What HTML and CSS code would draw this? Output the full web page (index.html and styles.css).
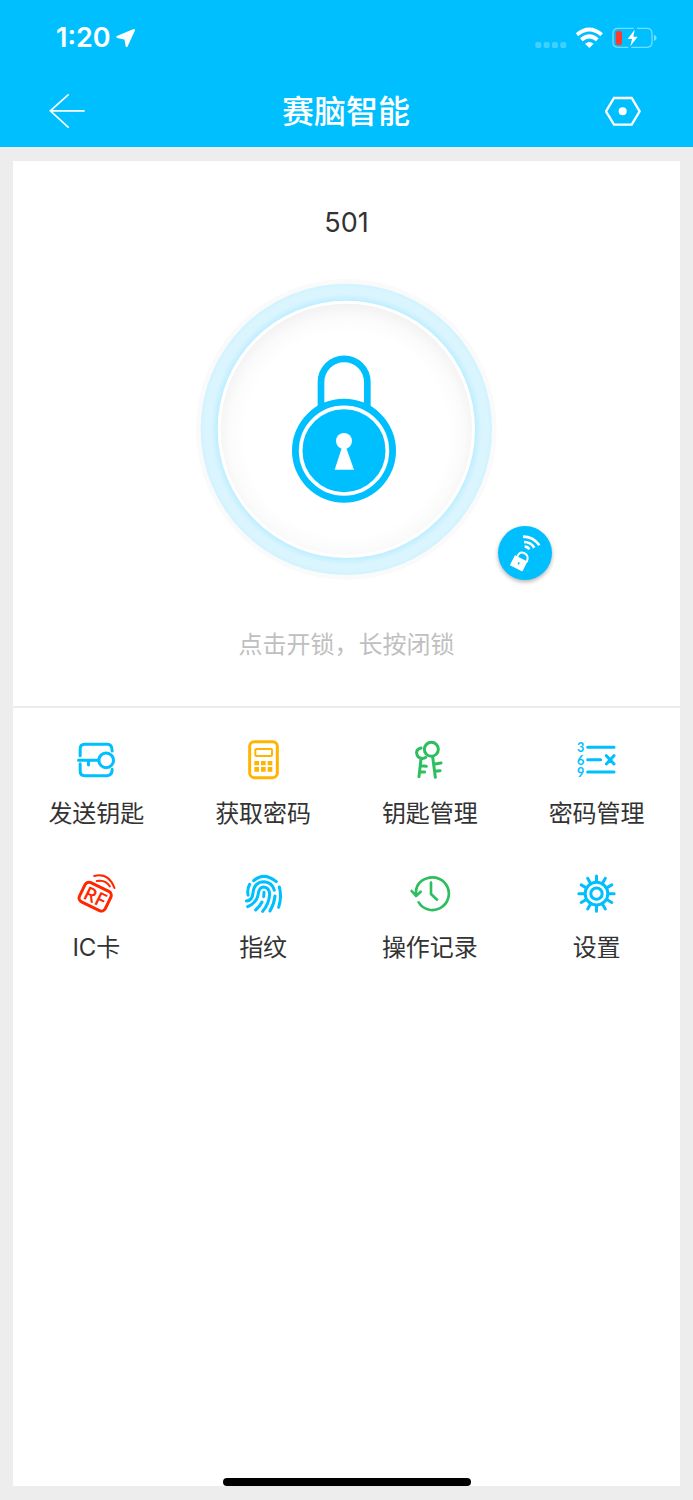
FILE: index.html
```html
<!DOCTYPE html>
<html lang="zh-CN">
<head>
<meta charset="utf-8">
<meta name="viewport" content="width=device-width, initial-scale=1">
<title>赛脑智能</title>
<link rel="stylesheet" href="styles.css">
</head>
<body>
<header class="header">
  <div class="status">
    <div class="status-left">
      <span class="time">1:20</span>
      <svg class="locate" viewBox="348 84 60 60" aria-hidden="true"><path d="M402 90 380 138 376 116 352 111Z" fill="#fff" stroke="#fff" stroke-width="6" stroke-linejoin="round"/></svg>
    </div>
    <div class="status-right">
      <svg class="signal" viewBox="567 81 96 66" aria-hidden="true"><g fill="#fff" opacity=".25"><rect x="568" y="126" width="18" height="18" rx="5"/><rect x="593" y="126" width="18" height="18" rx="5"/><rect x="618" y="126" width="18" height="18" rx="5"/><rect x="643" y="126" width="18" height="18" rx="5"/></g></svg>
      <svg class="wifi" viewBox="687 81 87 66" aria-hidden="true"><g fill="none" stroke="#fff" stroke-width="12"><path d="M693 104Q730 73 767 104"/><path d="M706 119Q730 99 754 119"/></g><path d="M717 131Q730 121 743 131L730 144Z" fill="#fff"/></svg>
      <svg class="battery" viewBox="798 81 138 66" aria-hidden="true"><g fill="none" stroke="#fff" stroke-opacity=".45" stroke-width="4"><path d="M863 85H816Q801 85 801 100V127Q801 142 816 142H847"/><path d="M873 85H903Q918 85 918 100V127Q918 142 903 142H856"/></g><path d="M924 104Q932 107 932 113.500Q932 120 924 123Z" fill="#fff" fill-opacity=".45"/><rect x="809" y="93" width="19" height="42" rx="6" fill="#ff3b30"/><path d="M866 89 845 117H858L853 139 875 110H862Z" fill="#fff"/></svg>
    </div>
  </div>
  <nav class="nav">
    <button class="icon-button" type="button" aria-label="返回"><svg viewBox="146 276 114 114"><path d="M253 329.500H150M205 280 150 329.500 205 380" fill="none" stroke="#fff" stroke-width="5"/></svg></button>
    <h1 class="title">赛脑智能</h1>
    <button class="icon-button" type="button" aria-label="网关"><svg viewBox="777 279 114 114"><path d="M780 334 804 294H857L881 334 857 374H804Z" fill="none" stroke="#fff" stroke-width="7"/><circle cx="830" cy="334" r="12" fill="#fff"/></svg></button>
  </nav>
</header>

<main class="card">
  <section class="lock-panel">
    <h2 class="room">501</h2>
    <div class="dial-row">
      <button class="dial" type="button" aria-label="开锁">
        <svg viewBox="48 263 906 906">
          <defs>
            <radialGradient id="ring" gradientUnits="userSpaceOnUse" cx="499" cy="717" r="437">
              <stop offset=".88" stop-color="#bdeefe"/><stop offset=".93" stop-color="#dbf5ff"/><stop offset=".97" stop-color="#dbf5ff"/><stop offset="1" stop-color="#cff3fe"/>
            </radialGradient>
            <radialGradient id="face" gradientUnits="userSpaceOnUse" cx="499" cy="732" r="392">
              <stop offset=".78" stop-color="#fff"/><stop offset=".9" stop-color="#fbfbfb"/><stop offset="1" stop-color="#f2f2f2"/>
            </radialGradient>
          </defs>
          <circle cx="499" cy="717" r="451" fill="#fafafa"/>
          <circle cx="499" cy="717" r="437" fill="url(#ring)"/>
          <circle cx="499" cy="717" r="386" fill="#fff"/>
          <circle cx="499" cy="717" r="377" fill="url(#face)"/>
          <path d="M423 660V575A69.500 69.500 0 0 1 562 575V660" fill="#fff" stroke="#00bfff" stroke-width="20"/>
          <circle cx="492" cy="781" r="156" fill="#00bfff"/>
          <circle cx="492" cy="781" r="130" fill="none" stroke="#fff" stroke-width="11"/>
          <circle cx="492" cy="752" r="24" fill="#fff"/>
          <path d="M487 768H497L522 838H464Z" fill="#fff"/>
        </svg>
      </button>
      <button class="remote" type="button" aria-label="远程开锁">
        <svg viewBox="23 30 162 162">
          <g fill="none" stroke="#fff"><path d="M98 62Q129 62 147 88" stroke-width="8"/><path d="M101 78Q121 78 132 95" stroke-width="8"/><path d="M103 92Q112 92 117 100" stroke-width="8"/><path d="M79 128Q84 105 101 111Q118 119 109 138" stroke-width="6"/></g>
          <rect x="-21" y="-17" width="42" height="34" rx="2" fill="#fff" transform="translate(85 142) rotate(27)"/>
          <ellipse cx="85" cy="142" rx="2.500" ry="4" fill="#00bfff" transform="rotate(27 85 142)"/>
        </svg>
      </button>
    </div>
    <p class="hint">点击开锁，长按闭锁</p>
  </section>

  <section class="menu">
    <button class="item blue" type="button">
      <svg class="icon" viewBox="37.500 18 144 144"><path d="M62 77V57Q62 43 76 43H143Q158 43 158 63M62 101V122Q62 137 76 137H143Q158 137 158 118M57 91H118M87 91V105"/><circle cx="140" cy="91" r="22"/></svg>
      <span>发送钥匙</span>
    </button>
    <button class="item amber" type="button">
      <svg class="icon" viewBox="27 18 144 144"><rect x="59" y="35" width="83" height="108" rx="14"/><rect class="thin" x="76" y="57" width="50" height="21" rx="3"/><path class="solid" d="M73 93h14v13H73zM93 93h14v13H93zM113 93h14v13h-14zM73 111h14v14H73zM93 111h14v14H93zM113 111h14v14h-14z"/></svg>
      <span>获取密码</span>
    </button>
    <button class="item green" type="button">
      <svg class="icon" viewBox="33 18 144 144"><circle cx="109" cy="58" r="21"/><path d="M113 80 121 142M117 103 138 99M120 124 135 122M78 54Q63 59 65 70Q67 84 80 85Q87 86 92 82M78 87 72 140M77 107 94 109M75 125 89 126"/></svg>
      <span>钥匙管理</span>
    </button>
    <button class="item blue" type="button">
      <svg class="icon" viewBox="39 18 144 144"><path d="M83 52H162M83 89H122M83 126H162M139 77 162 102M162 77 139 102"/><g class="digits"><text x="51" y="66">3</text><text x="51" y="104">6</text><text x="51" y="142">9</text></g></svg>
      <span>密码管理</span>
    </button>
    <button class="item red" type="button">
      <svg class="icon" viewBox="37.500 15 144 144"><g transform="translate(107 95) rotate(26)"><rect x="-43" y="-32" width="86" height="64" rx="13"/><text class="rf" x="0" y="21">RF</text></g><path class="thin" d="M104 33Q147 22 165 69M112 48Q138 43 151 64"/></svg>
      <span>IC卡</span>
    </button>
    <button class="item blue" type="button">
      <svg class="icon" viewBox="537 15 144 144"><path d="M581 47Q612 20 649 50M569 58Q561 72 564 90M658 66Q666 96 656 127M559 108Q577 107 579 84Q582 50 613 50Q637 52 643 76M645 93Q643 115 630 138M563 125Q592 112 595 85Q598 66 611 66Q628 68 629 88Q627 116 608 139M612 82 611 95M606 111Q599 125 587 135"/></svg>
      <span>指纹</span>
    </button>
    <button class="item green" type="button">
      <svg class="icon" viewBox="33 15 144 144"><path class="medium" d="M63 90Q60 52 96 40A49 49 0 1 1 71 112M50 78 63 93 77 80M108 53V87L126 104"/></svg>
      <span>操作记录</span>
    </button>
    <button class="item blue" type="button">
      <svg class="icon" viewBox="533 15 144 144"><circle cx="603.500" cy="86" r="34"/><circle cx="603.500" cy="86" r="17"/><g transform="translate(603.500 86)"><path id="spokes" d="M0-38V-53M0 38V53M-38 0H-53M38 0H53"/><use href="#spokes" transform="rotate(30)"/><use href="#spokes" transform="rotate(60)"/></g></svg>
      <span>设置</span>
    </button>
  </section>
</main>
<div class="home-indicator"></div>
</body>
</html>
```

FILE: styles.css
```css
* {
  box-sizing: border-box;
}

body {
  margin: 0;
  min-height: 100vh;
  display: flex;
  flex-direction: column;
  background: #ededed;
  color: #333;
  font-family: Inter, "Noto Sans CJK SC", sans-serif;
}

button {
  border: 0;
  padding: 0;
  background: none;
  color: inherit;
  font: inherit;
  cursor: pointer;
}

svg {
  display: block;
}

.header {
  background: #00bfff;
  color: #fff;
}

.status {
  display: flex;
  align-items: center;
  justify-content: space-between;
  height: 76px;
  padding: 0 35px 0 56px;
}

.status-left {
  display: flex;
  align-items: center;
  gap: 5px;
}

.status-right {
  display: flex;
  align-items: center;
  gap: 8px;
}

.time {
  font-size: 27px;
  font-weight: 600;
  line-height: 32px;
}

.locate {
  width: 20px;
  height: 20px;
}

.signal {
  width: 32px;
  height: 22px;
}

.wifi {
  width: 29px;
  height: 22px;
}

.battery {
  width: 46px;
  height: 22px;
}

.nav {
  display: flex;
  align-items: center;
  justify-content: space-between;
  height: 71px;
  padding: 0 50px 0 49px;
}

.icon-button,
.icon-button svg {
  width: 38px;
  height: 38px;
}

.title {
  margin: 0;
  font-size: 32px;
  font-weight: 500;
  line-height: 48px;
}

.card {
  flex: 1;
  margin: 14px 13px;
  background: #fff;
}

.lock-panel {
  padding: 45px 0 44px;
  border-bottom: 2px solid #ededed;
  text-align: center;
}

.room {
  margin: 0 0 38px;
  font-size: 27px;
  font-weight: 400;
  line-height: 34px;
}

.dial-row {
  display: grid;
  grid-template-columns: 1fr auto 1fr;
}

.dial {
  grid-column: 2;
  border-radius: 50%;
}

.dial svg {
  width: 302px;
  height: 302px;
}

.remote {
  align-self: end;
  justify-self: start;
  border-radius: 50%;
  background: #00bfff;
  box-shadow: 0 2px 4px rgba(0, 0, 0, 0.3);
}

.remote svg {
  width: 54px;
  height: 54px;
}

.hint {
  margin: 48px 0 0;
  color: #bfbfbf;
  font-size: 24px;
  line-height: 34px;
}

.menu {
  display: grid;
  grid-template-columns: repeat(4, 1fr);
  row-gap: 38px;
  padding: 28px 0;
}

.item {
  display: flex;
  flex-direction: column;
  align-items: center;
  gap: 12px;
  font-size: 24px;
  line-height: 36px;
}

.icon {
  width: 48px;
  height: 48px;
  fill: none;
  stroke: currentColor;
  stroke-width: 9;
  stroke-linecap: round;
  stroke-linejoin: round;
}

.icon .thin {
  stroke-width: 6;
}

.icon .medium {
  stroke-width: 8;
}

.icon .solid {
  fill: currentColor;
  stroke: none;
}

.digits,
.rf {
  fill: currentColor;
  stroke: none;
}

.digits {
  font: 700 38px Lato, sans-serif;
}

.rf {
  font: 600 58px "Open Sans", sans-serif;
  text-anchor: middle;
}

.blue .icon {
  color: #00bfff;
}

.amber .icon {
  color: #ffb400;
}

.green .icon {
  color: #2dbe60;
}

.red .icon {
  color: #ff2600;
}

.home-indicator {
  position: fixed;
  bottom: 14px;
  left: 50%;
  width: 248px;
  height: 8px;
  margin-left: -124px;
  border-radius: 4px;
  background: #000;
}
```
